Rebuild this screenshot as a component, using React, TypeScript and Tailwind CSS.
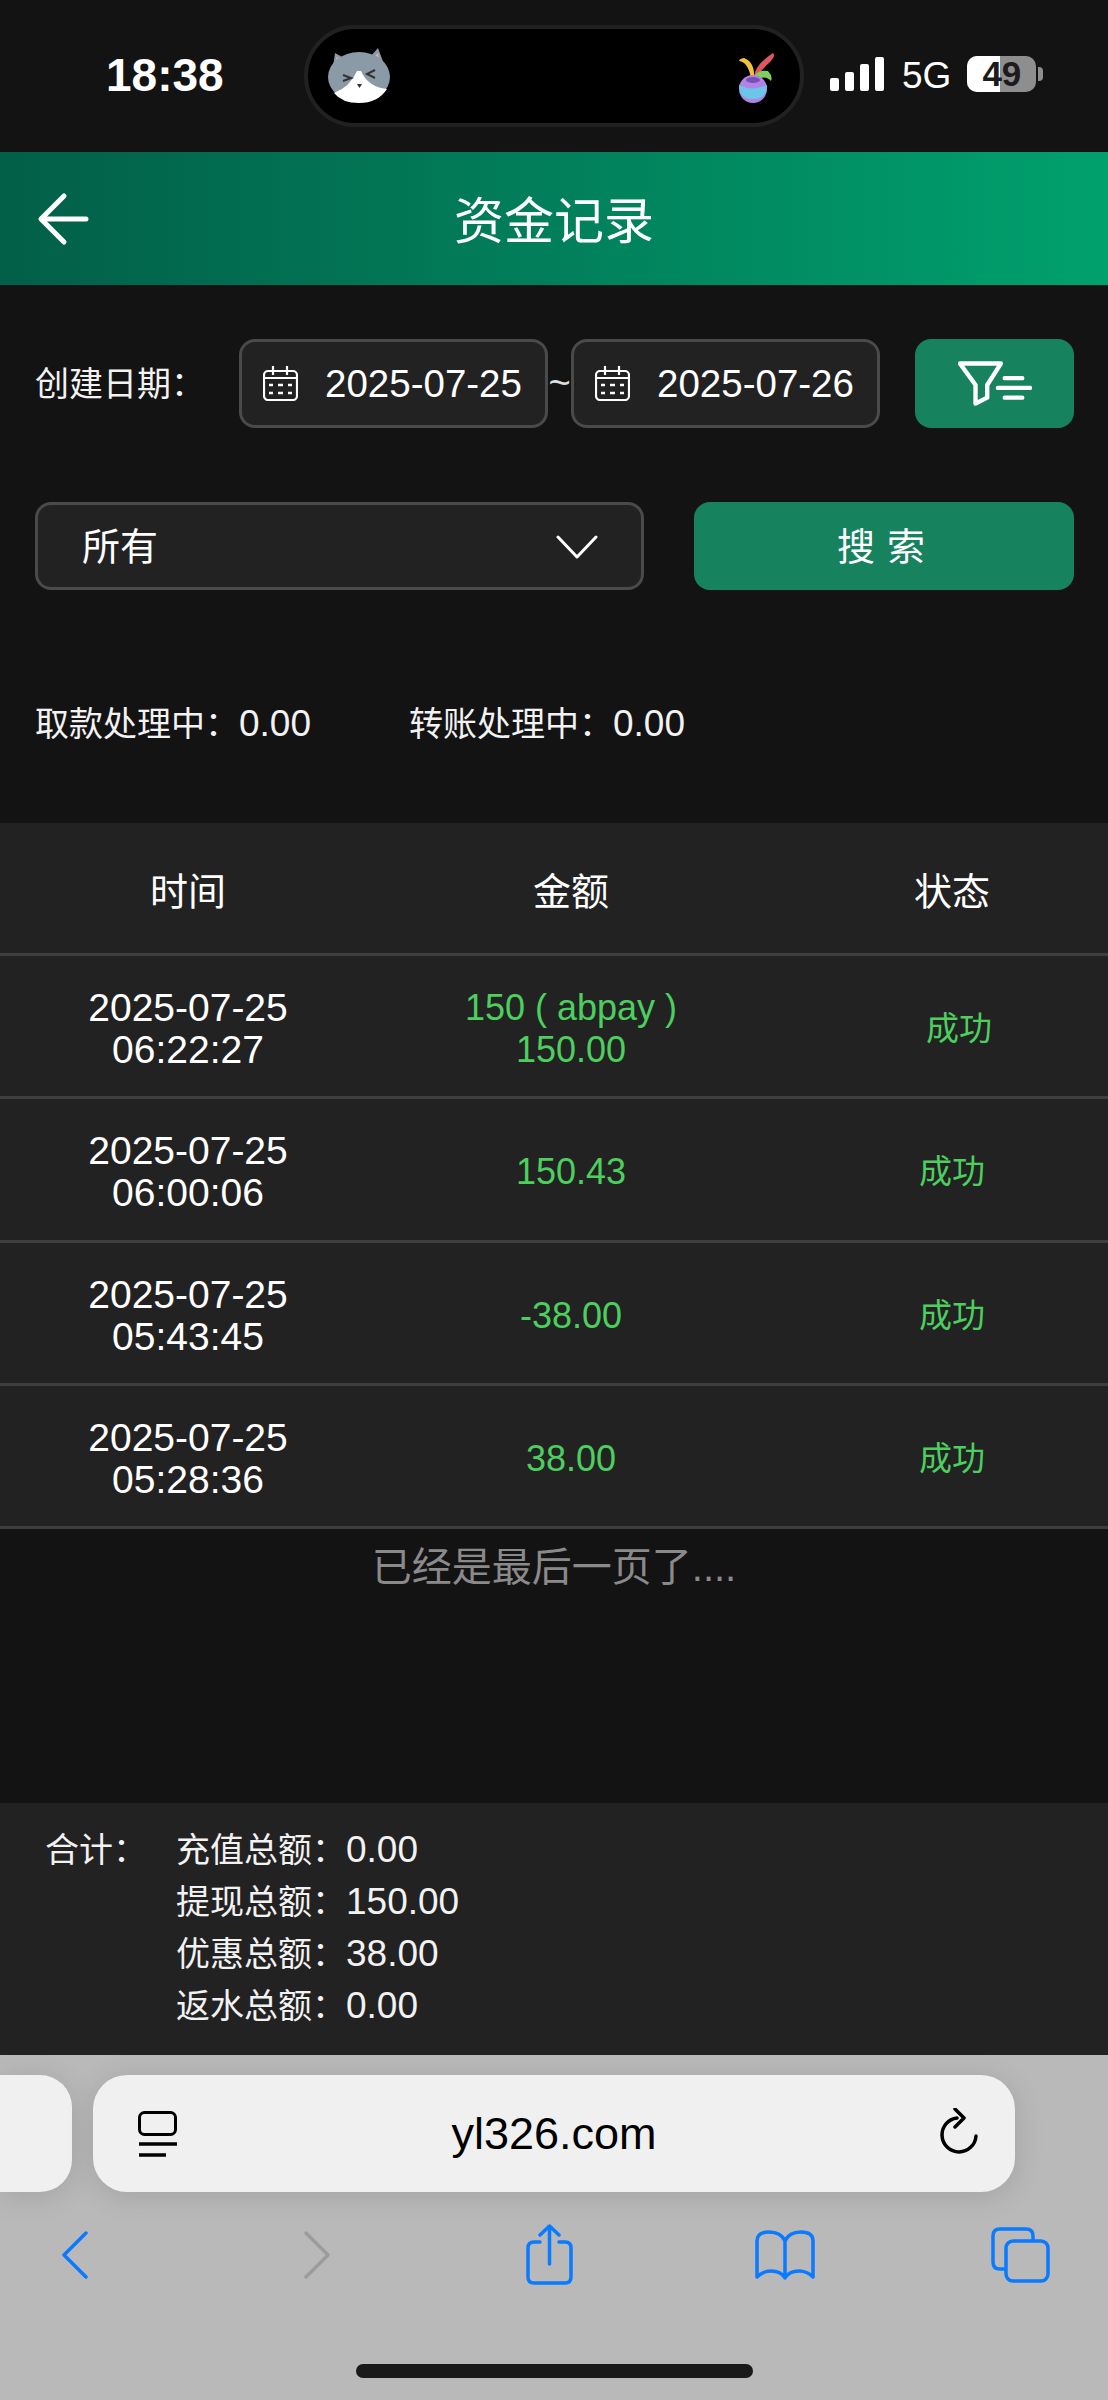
const rows = [
  { date: '2025-07-25', time: '06:22:27', amount: ['150 ( abpay )', '150.00'], statusPad: 'pl-[44px]' },
  { date: '2025-07-25', time: '06:00:06', amount: ['150.43'], statusPad: 'pl-[30px]' },
  { date: '2025-07-25', time: '05:43:45', amount: ['-38.00'], statusPad: 'pl-[30px]' },
  { date: '2025-07-25', time: '05:28:36', amount: ['38.00'], statusPad: 'pl-[30px]' },
];

const totals = [
  ['充值总额：', '0.00'],
  ['提现总额：', '150.00'],
  ['优惠总额：', '38.00'],
  ['返水总额：', '0.00'],
];

function CalendarIcon() {
  return (
    <svg width="35" height="35" viewBox="0 0 35 35" fill="none" stroke="white" strokeWidth="2.2" className="shrink-0">
      <rect x="1" y="5" width="33" height="29" rx="4" />
      <path d="M10 0v9M24 0v9M1 12h33" />
      <path d="M6 19h4M15 19h5M25 19h4M6 27h4M15 27h5M25 27h4" strokeWidth="2.6" />
    </svg>
  );
}

function CatFace() {
  return (
    <svg width="62" height="56" viewBox="0 0 62 56" className="absolute left-[20px] top-[18px]">
      <path d="M5 20 L7 6 L16 11Z M57 20 L50 1 L42 10Z" fill="#8a9aa6" />
      <path d="M8 15 L8.5 10 L12 12Z M51 10 L50 6 L47 9Z" fill="#e8a9a9" />
      <ellipse cx="31" cy="30" rx="31" ry="25" fill="#8a9aa6" />
      <path d="M6 46 Q22 40 29 24 L33 24 Q40 40 59 42 Q50 56 31 56 Q14 56 6 46Z" fill="white" />
      <path d="M15 28l8 3-8 3M47 23l-8 4 8 4" fill="none" stroke="#333" strokeWidth="2" />
      <path d="M29 37h5l-2.500 4z" fill="#333" />
    </svg>
  );
}

function PlantPot() {
  return (
    <svg width="37" height="51" viewBox="0 0 37 51" className="absolute right-[25px] top-[23px]">
      <path d="M16 24 Q18 12 35 1 Q38 4 32 10 Q24 17 19 25Z" fill="#e0565f" />
      <path d="M16 26 Q17 10 6 6 Q1 7 1 9 Q10 10 13 26Z" fill="#f2c23e" />
      <path d="M15 27 Q18 17 30 19 Q35 24 33 29 Q27 22 17 29Z" fill="#7fd05a" />
      <ellipse cx="15" cy="37" rx="14" ry="14" fill="#b183e6" />
      <path d="M1 33 Q15 40 29 33 Q29 47 15 47 Q1 47 1 33Z" fill="#6cc6e8" />
      <ellipse cx="15" cy="28" rx="7" ry="3" fill="#7a4fb5" />
    </svg>
  );
}

export default function App() {
  return (
    <div className="w-[1108px] h-[2400px] flex flex-col overflow-hidden bg-[#141314] text-white font-['Liberation_Sans','Noto_Sans_CJK_SC',sans-serif]">
      {/* status bar */}
      <div className="h-[152px] shrink-0 flex items-start">
        <div className="w-[304px] pl-[106px] pt-[50px] text-[46px] leading-[50px] font-semibold">18:38</div>
        <div className="relative w-[500px] h-[102px] mt-[25px] rounded-[51px] bg-black border-[4px] border-[#222122]">
          <CatFace />
          <PlantPot />
        </div>
        <div className="flex items-end gap-[6px] ml-[26px] mt-[57px]">
          <span className="w-[9px] h-[13px] bg-white rounded-[2px]" />
          <span className="w-[9px] h-[19px] bg-white rounded-[2px]" />
          <span className="w-[9px] h-[27px] bg-white rounded-[2px]" />
          <span className="w-[9px] h-[34px] bg-white rounded-[2px]" />
        </div>
        <div className="ml-[18px] mt-[57px] text-[37px] leading-[38px]">5G</div>
        <div className="relative ml-[16px] mt-[56px] w-[69px] h-[36px] rounded-[10px] bg-[#8e8e8e]">
          <div className="absolute left-0 top-0 bottom-0 w-[33px] bg-white rounded-l-[10px]" />
          <div className="absolute inset-0 text-center text-[#1c1c1e] text-[35px] leading-[36px] font-bold">49</div>
        </div>
        <div className="ml-[2px] mt-[67px] w-[5px] h-[14px] rounded-r-[4px] bg-[#8e8e8e]" />
      </div>

      {/* title bar */}
      <div className="relative h-[133px] shrink-0 flex items-center justify-center pt-[6px] bg-linear-to-r from-[#025f48] to-[#00a16d]">
        <svg width="54" height="54" viewBox="0 0 54 54" fill="none" stroke="white" strokeWidth="5" strokeLinecap="round" strokeLinejoin="round" className="absolute left-[37px] top-[40px]">
          <path d="M27 4 L4 27 L27 50M5 27 H49" />
        </svg>
        <span className="text-[50px] leading-[60px]">资金记录</span>
      </div>

      {/* date filter */}
      <div className="mt-[54px] pl-[35px] flex items-center h-[89px] shrink-0">
        <span className="w-[204px] text-[34px] leading-[40px] text-[#f2f2f2]">创建日期：</span>
        <div className="w-[309px] h-[89px] flex items-center pl-[21px] gap-[27px] bg-[#232223] border-[3px] border-[#4b4a4b] rounded-[16px] text-[38.5px]">
          <CalendarIcon />
          <span>2025-07-25</span>
        </div>
        <span className="w-[23px] text-center text-[38px] text-[#ddd]">~</span>
        <div className="w-[309px] h-[89px] flex items-center pl-[21px] gap-[27px] bg-[#232223] border-[3px] border-[#4b4a4b] rounded-[16px] text-[38.5px]">
          <CalendarIcon />
          <span>2025-07-26</span>
        </div>
        <div className="ml-[35px] w-[159px] h-[89px] flex items-center justify-center bg-[#16825e] rounded-[16px]">
          <svg width="74" height="46" viewBox="0 0 76 46" fill="none" stroke="white" strokeWidth="4.500" strokeLinecap="round" strokeLinejoin="round">
            <path d="M2 2 H44 L30 24 V37 L18 43 V24Z" />
            <path d="M48 17 H66M41 27 H74M48 37 H66" />
          </svg>
        </div>
      </div>

      {/* type select and search */}
      <div className="mt-[74px] pl-[35px] flex h-[88px] shrink-0">
        <div className="w-[609px] h-[88px] flex items-center justify-between pl-[44px] pr-[43px] pt-[2px] bg-[#232223] border-[3px] border-[#4b4a4b] rounded-[16px]">
          <span className="text-[38px]">所有</span>
          <svg width="42" height="24" viewBox="0 0 42 24" fill="none" stroke="white" strokeWidth="3" strokeLinecap="round" strokeLinejoin="round">
            <path d="M2 2 L21 22 L40 2" />
          </svg>
        </div>
        <div className="ml-[50px] w-[380px] h-[88px] flex items-center justify-center pt-[2px] pl-[6px] bg-[#16825e] rounded-[16px] text-[38px] tracking-[12px]">
          搜索
        </div>
      </div>

      {/* pending amounts */}
      <div className="mt-[109px] pl-[35px] h-[50px] shrink-0 flex items-center text-[34px] text-[#f2f2f2]">
        <span className="w-[374px]">取款处理中：<span className="text-[37px]">0.00</span></span>
        <span>转账处理中：<span className="text-[37px]">0.00</span></span>
      </div>

      {/* records */}
      <div className="mt-[74px] bg-[#232223] shrink-0">
        <div className="h-[133px] flex items-center pt-[8px] border-b-[3px] border-[#3f3e3f] text-[38px]">
          <span className="w-[376px] text-center">时间</span>
          <span className="w-[390px] text-center">金额</span>
          <span className="w-[342px] pl-[30px] text-center">状态</span>
        </div>
        {rows.map((row) => (
          <div key={row.time} className="h-[143.3px] flex items-center pt-[6px] border-b-[3px] border-[#3f3e3f] text-[39px] leading-[42px]">
            <div className="w-[376px] text-center">
              <div>{row.date}</div>
              <div>{row.time}</div>
            </div>
            <div className="w-[390px] text-center text-[#4ccf5e] text-[36px]">
              {row.amount.map((line) => (
                <div key={line}>{line}</div>
              ))}
            </div>
            <div className={`w-[342px] text-center text-[#4ccf5e] text-[33px] ${row.statusPad}`}>成功</div>
          </div>
        ))}
      </div>
      <div className="mt-[14px] text-center text-[40px] leading-[48px] text-[#8b8a8b] shrink-0">已经是最后一页了....</div>
      <div className="flex-1" />

      {/* totals */}
      <div className="h-[252px] shrink-0 bg-[#232223] flex pt-[21px] text-[34px] leading-[52px] text-[#f2f2f2]">
        <span className="w-[176px] pl-[45px]">合计：</span>
        <div>
          {totals.map(([label, value]) => (
            <div key={label}>
              {label}
              <span className="text-[37px]">{value}</span>
            </div>
          ))}
        </div>
      </div>

      {/* safari toolbar */}
      <div className="h-[345px] shrink-0 bg-[#b9b9b9] flex flex-col text-black">
        <div className="mt-[20px] h-[117px] flex gap-[21px]">
          <div className="w-[72px] h-[117px] bg-[#f0f0f0] rounded-r-[32px] shadow-[0_4px_30px_rgba(0,0,0,0.12)]" />
          <div className="relative w-[922px] h-[117px] flex items-center justify-center bg-[#f0f0f0] rounded-[34px] shadow-[0_4px_30px_rgba(0,0,0,0.12)]">
            <svg width="40" height="46" viewBox="0 0 40 46" fill="none" stroke="black" strokeWidth="3" className="absolute left-[45px] top-[36px]">
              <rect x="1.500" y="1.500" width="36" height="22" rx="5" />
              <path d="M1 33 H39" strokeWidth="3.500" />
              <path d="M1 44 H28" strokeWidth="3.500" />
            </svg>
            <span className="text-[45px] leading-[52px]">yl326.com</span>
            <svg width="38" height="48" viewBox="0 0 38 48" fill="none" stroke="black" strokeWidth="3.500" strokeLinecap="round" strokeLinejoin="round" className="absolute left-[847px] top-[33px]">
              <path d="M17 10 A17 17 0 1 0 36 28" />
              <path d="M15 1 L24 10 L15 19" />
            </svg>
          </div>
        </div>
        <div className="mt-[32px] h-[61px] flex items-center pl-[62px]">
          <svg width="26" height="48" viewBox="0 0 26 48" fill="none" stroke="#0a7aff" strokeWidth="3.500" strokeLinecap="round" strokeLinejoin="round">
            <path d="M24 2 L2 24 L24 46" />
          </svg>
          <svg width="26" height="48" viewBox="0 0 26 48" fill="none" stroke="#9c9c9c" strokeWidth="3.500" strokeLinecap="round" strokeLinejoin="round" className="ml-[216px]">
            <path d="M2 2 L24 24 L2 46" />
          </svg>
          <svg width="47" height="61" viewBox="0 0 47 61" fill="none" stroke="#0a7aff" strokeWidth="3.500" strokeLinecap="round" strokeLinejoin="round" className="ml-[196px]">
            <path d="M14 18 H8 Q2 18 2 24 V53 Q2 59 8 59 H39 Q45 59 45 53 V24 Q45 18 39 18 H33" />
            <path d="M23.500 2 V40M14 11 L23.500 2 L33 11" />
          </svg>
          <svg width="60" height="50" viewBox="0 0 60 50" fill="none" stroke="#0a7aff" strokeWidth="3.500" strokeLinecap="round" strokeLinejoin="round" className="ml-[182px]">
            <path d="M30 11 Q26 2 14 2 Q2 2 2 11 V47 Q8 41 16 41 Q26 41 30 48 Q34 41 44 41 Q52 41 58 47 V11 Q58 2 46 2 Q34 2 30 11 V48" />
          </svg>
          <svg width="59" height="56" viewBox="0 0 59 56" fill="none" stroke="#0a7aff" strokeWidth="3.500" strokeLinejoin="round" className="ml-[176px]">
            <path d="M14 42 H9 Q2 42 2 35 V9 Q2 2 9 2 H35 Q42 2 42 9 V14" />
            <rect x="15" y="14" width="42" height="40" rx="7" />
          </svg>
        </div>
        <div className="mt-[79px] mx-auto w-[397px] h-[14px] rounded-full bg-[#1a1a1a]" />
      </div>
    </div>
  );
}
